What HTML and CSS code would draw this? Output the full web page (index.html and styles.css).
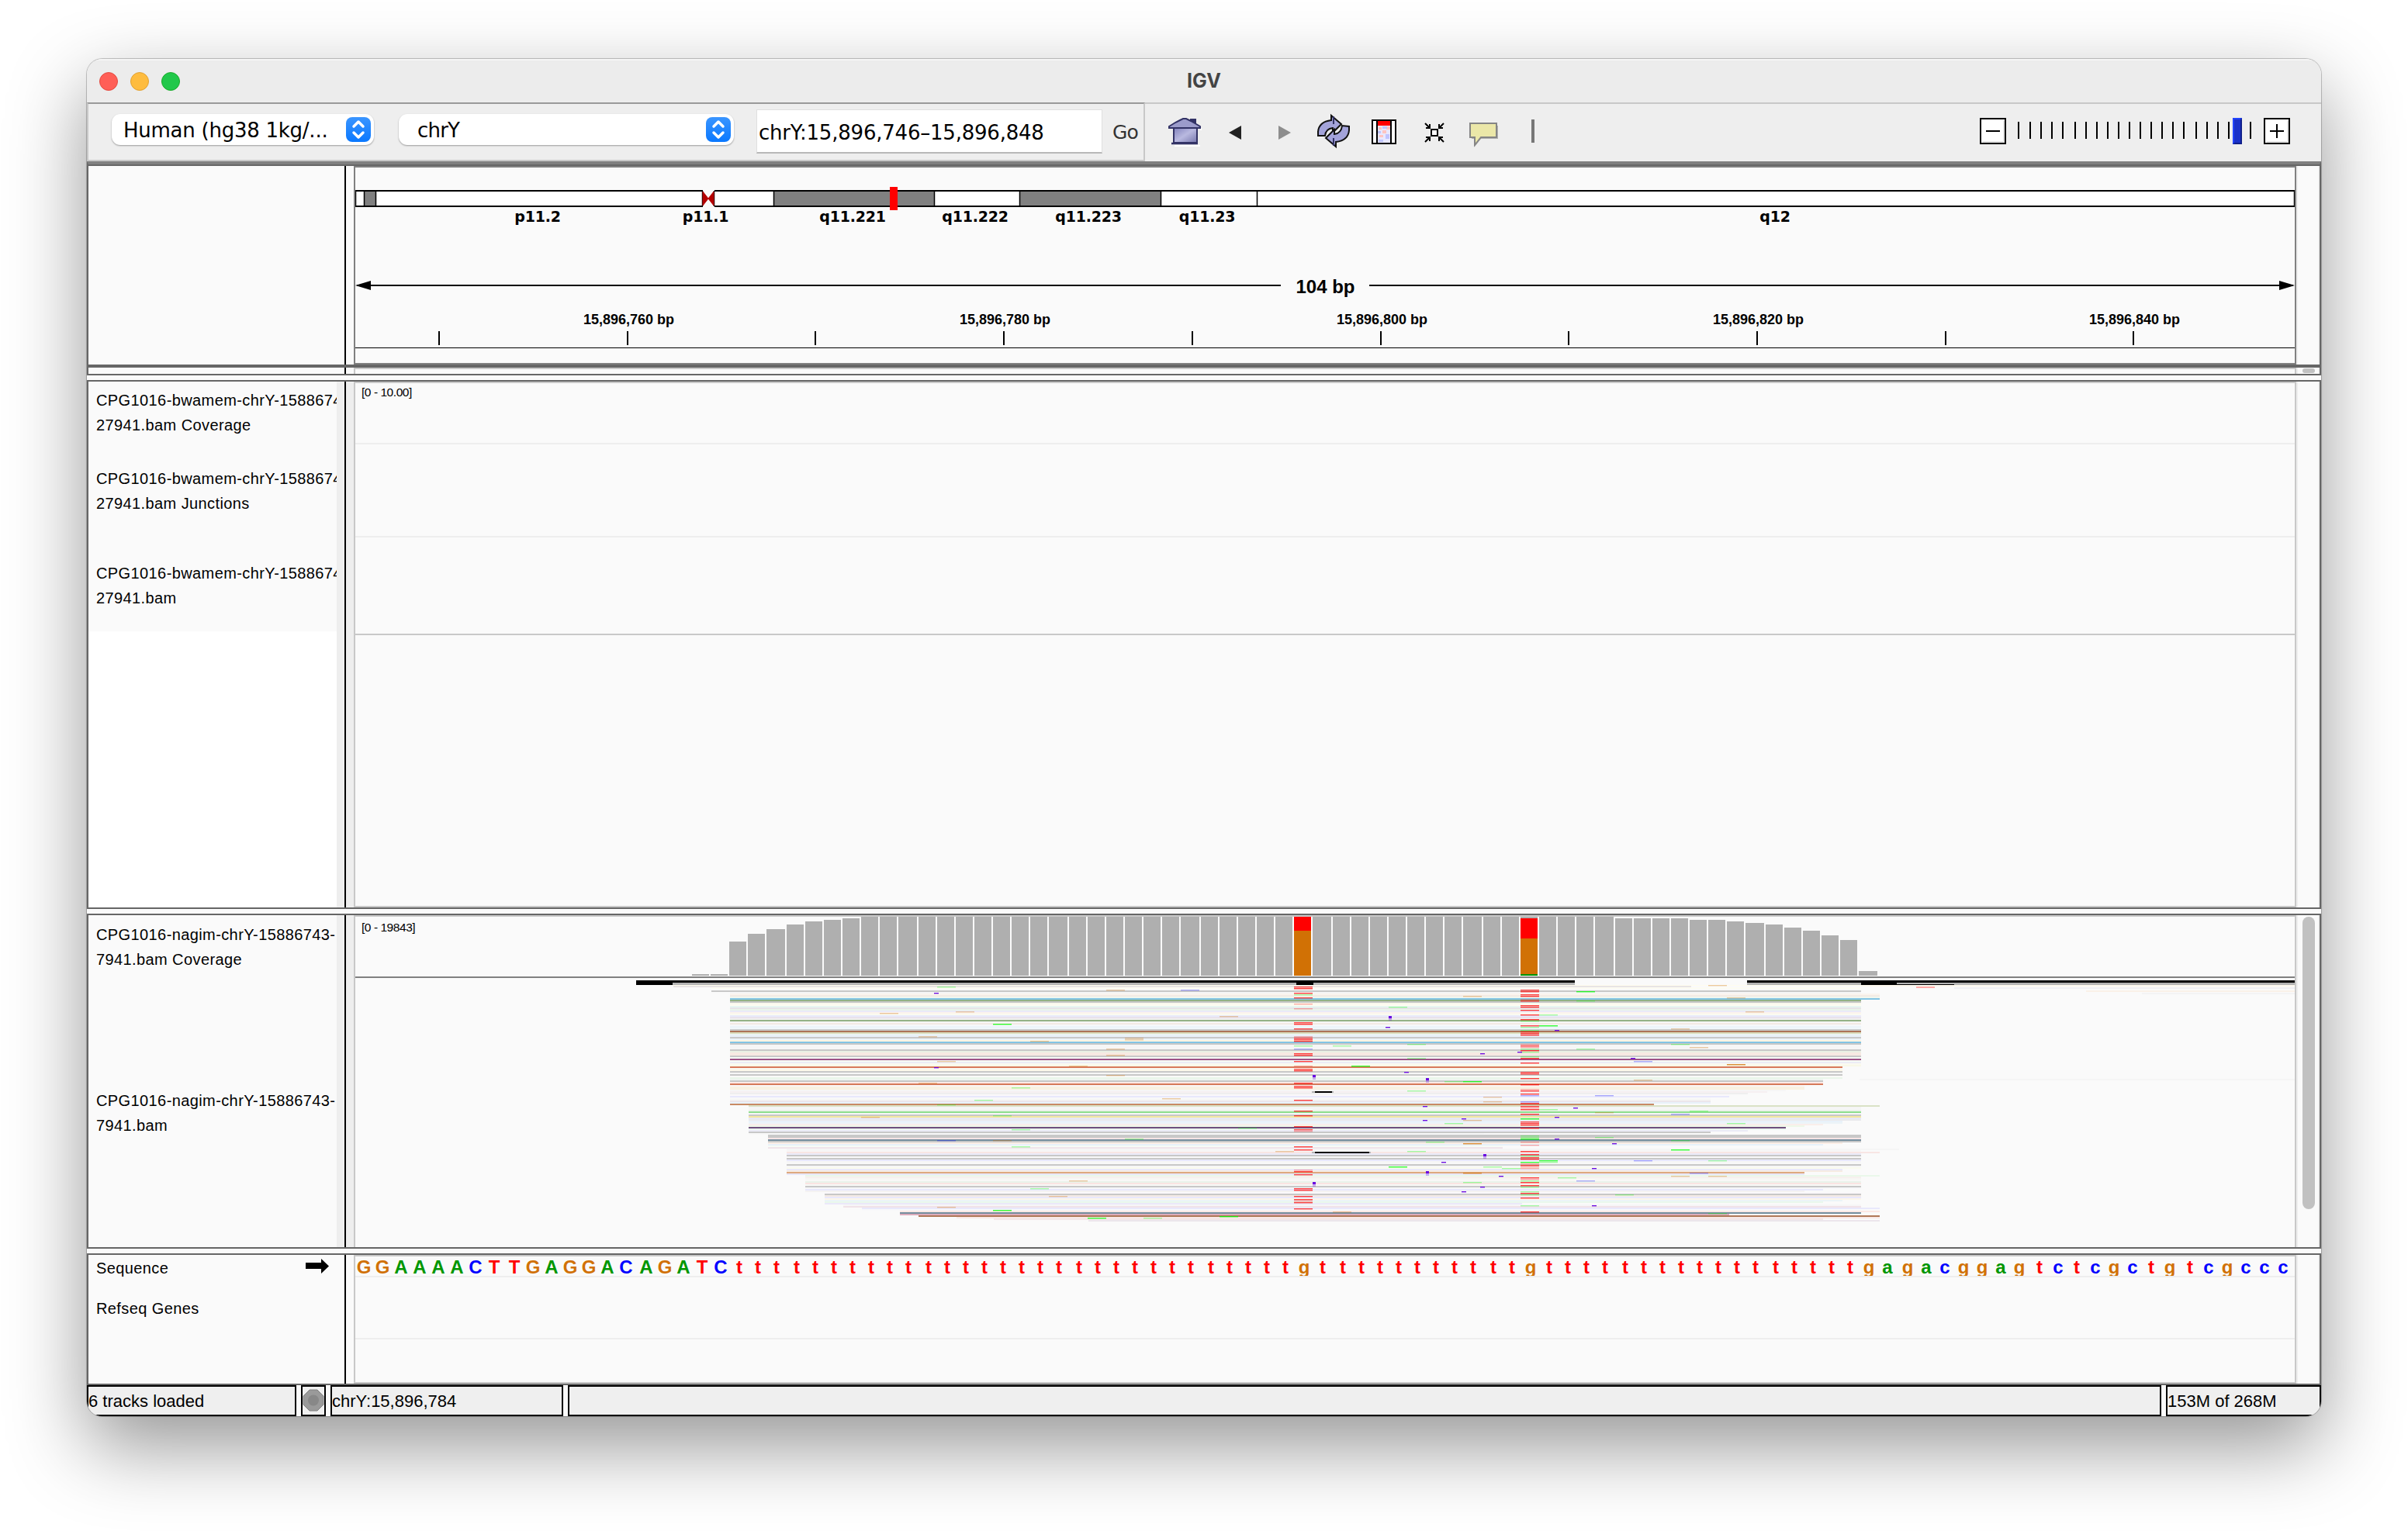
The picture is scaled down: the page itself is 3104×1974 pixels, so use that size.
FILE: index.html
```html
<!DOCTYPE html>
<html lang="en">
<head>
<meta charset="utf-8">
<title>IGV</title>
<link rel="stylesheet" href="styles.css">
</head>
<body>
<main class="window">
  <header class="titlebar">
    <div class="lights"><i class="light red"></i><i class="light amber"></i><i class="light green"></i></div>
    <h1 class="title">IGV</h1>
  </header>

  <div class="toolbar">
    <div class="locator">
      <div class="select genome"><span>Human (hg38 1kg/...</span><svg class="stepper" viewBox="0 0 32 32"><path d="M10 12l6-6 6 6M10 20l6 6 6-6"/></svg></div>
      <div class="select chrom"><span>chrY</span><svg class="stepper" viewBox="0 0 32 32"><path d="M10 12l6-6 6 6M10 20l6 6 6-6"/></svg></div>
      <div class="locus">chrY:15,896,746–15,896,848</div>
      <div class="go">Go</div>
    </div>
    <svg class="icons" viewBox="1478 134 560 72">
      <defs>
        <linearGradient id="lilac" x1="0" y1="0" x2="1" y2="1"><stop offset="0" stop-color="#7f7fba"/><stop offset=".5" stop-color="#b9b9e0"/><stop offset="1" stop-color="#7676ac"/></linearGradient>
      </defs>
      <g>
        <path d="M1514 188h33M1548 165v3" stroke="#fff" stroke-width="2"/>
        <path d="M1513 164h30v20h-30z" fill="url(#lilac)" stroke="#333366" stroke-width="2"/>
        <path d="M1534 158v-5h8v10z" fill="#333366"/>
        <path d="M1507 163l8-5 6-3 4-2h4l6 3 7 4 5 3v2h-40z" fill="#9c9ccb" stroke="#333366" stroke-width="2"/>
        <path d="M1510 185h34" stroke="#333366" stroke-width="2.5"/>
      </g>
      <path d="M1584 171l16-9v18z" fill="#222"/>
      <path d="M1664 171l-16-9v18z" fill="#8d8d8d"/>
      <g fill="#a3a3da" stroke="#111" stroke-width="2">
        <path d="M1699 175v-5q1-13 17-15v-6l13 11-11 11v-6q-9 1-10 10z"/>
        <path d="M1739 163v5q-1 13-17 15v6l-13-11 11-11v6q9-1 10-11z"/>
        <path d="M1719 150v10M1719 178v10" stroke="#333366"/>
      </g>
      <g>
        <path d="M1769 155h30v30h-30z" fill="#fff" stroke="#000" stroke-width="2"/>
        <path d="M1776 162h16v22h-16z" fill="#e8e8ff"/>
        <path d="M1777 164h4v3h-4zM1778 174h5v3h-5zM1782 168h5v4h-5zM1787 163h5v4h-5z" fill="#ffc4c0"/>
        <path d="M1782 163h6v3h-6zM1777 180h6v3h-6zM1786 173h5v6h-5zM1776 169h4v3h-4z" fill="#c0c4ff"/>
        <path d="M1776 156h16v6h-16z" fill="#f00"/>
        <path d="M1775 155v30M1793 155v30" stroke="#000" stroke-width="2"/>
      </g>
      <g stroke="#000" stroke-width="2" fill="none">
        <path d="M1845 167h8v8h-8z" fill="#fff"/>
        <path d="M1837 159l6 6M1861 159l-6 6M1837 183l6-6M1861 183l-6-6M1838 165h5v-5M1860 165h-5v-5M1838 177h5v5M1860 177h-5v5"/>
      </g>
      <path d="M1897 162h34v17h-22l-8 10v-10h-4z" fill="#b0b0b0"/>
      <path d="M1895 159h34v18h-20l-8 10v-10h-6z" fill="#ebe7a8" stroke="#858585" stroke-width="2"/>
      <path d="M1974 154h4v30h-4z" fill="#777"/>
    </svg>
    <svg class="zoomer" viewBox="2540 134 452 72" id="zoomer">
      <path d="M2553 153h32v32h-32zM2919 153h32v32h-32z" fill="#fff" stroke="#000" stroke-width="2"/>
      <path d="M2556 183h27v-27M2922 183h27v-27" fill="none" stroke="#e4e4e4" stroke-width="2"/>
      <path d="M2560 169h18M2926 169h18M2935 160v18" stroke="#000" stroke-width="2"/>
      <g id="zoom-ticks"></g>
      <path d="M2878 152h12v34h-12z" fill="#1a31c9"/><path d="M2878 152h10v2h-8v30h-2z" fill="#2244ff"/><path d="M2888 154h2v32h-10v-2h8z" fill="#10208a"/>
    </svg>
  </div>

  <section class="panel header">
    <div class="names"></div><div class="split"></div>
    <svg class="canvas" viewBox="458 216 2500 252" id="ruler">
      <path d="M458 246h448M921 246h2037M458 266h448M921 266h2037" stroke="#000" stroke-width="2"/>
      <path d="M458 247h447v18h-447zM921 247h2036v18h-2036z" fill="#fff"/>
      <path d="M469 247h15v18h-15zM998 247h206v18h-206zM1314 247h182v18h-182z" fill="#808080"/>
      <path d="M458.5 246v20M469.500 246v20M484.500 246v20M905.500 246v20M920.500 246v20M997.500 246v20M1204.500 246v20M1314.500 246v20M1496.500 246v20M1620.500 246v20M2957.500 246v20" stroke="#000" stroke-width="1.500"/>
      <path d="M906 247l7 9-7 9zM920 247l-7 9 7 9z" fill="#b40000" stroke="#b40000"/>
      <path d="M1147 241h10v30h-10z" fill="#f00"/>
      <g class="band"><text x="693" y="286">p11.2</text><text x="909.500" y="286">p11.1</text><text x="1099" y="286">q11.221</text><text x="1257" y="286">q11.222</text><text x="1403" y="286">q11.223</text><text x="1556" y="286">q11.23</text><text x="2288" y="286">q12</text></g>
      <path d="M460 368h1191M1765 368h1191" stroke="#000" stroke-width="2"/>
      <path d="M458 368l20-6v12zM2958 368l-20-6v12z"/>
      <text class="span" x="1708.500" y="378">104 bp</text>
      <g id="ruler-ticks"></g>
      <path d="M458 448h2500v1h-2500z"/>
    </svg>
    <div class="side"></div>
  </section>
  <section class="panel slim">
    <div class="names"></div><div class="split"></div><div class="canvas"></div>
    <div class="side"><i class="thumb"></i></div>
  </section>

  <section class="panel first">
    <div class="names">
      <div class="tracks">
        <p>CPG1016-bwamem-chrY-1588674<br>27941.bam Coverage</p>
        <p>CPG1016-bwamem-chrY-1588674<br>27941.bam Junctions</p>
        <p>CPG1016-bwamem-chrY-1588674<br>27941.bam</p>
      </div>
    </div><div class="split"></div>
    <div class="canvas">
      <div class="lane cov"><span class="range">[0 - 10.00]</span></div>
      <div class="lane junc"></div>
      <div class="lane reads"></div>
    </div>
    <div class="side"></div>
  </section>

  <section class="panel second">
    <div class="names">
      <p>CPG1016-nagim-chrY-15886743-<br>7941.bam Coverage</p>
      <p>CPG1016-nagim-chrY-15886743-<br>7941.bam</p>
    </div><div class="split"></div>
    <svg class="canvas" viewBox="458 1182 2500 426" shape-rendering="crispEdges">
      <text class="range" x="466" y="1201">[0 - 19843]</text>
      <g id="coverage"></g>
      <g id="reads"></g>
    </svg>
    <div class="side"><i class="thumb"></i></div>
  </section>

  <section class="panel third">
    <div class="names">
      <p class="seq-name">Sequence<svg class="arrow" viewBox="0 0 30 19"><path d="M0 5h20V0l10 9.500-10 9.500v-6H0z"/></svg></p>
      <p>Refseq Genes</p>
    </div><div class="split"></div>
    <div class="canvas">
      <div class="lane bases"><svg viewBox="458 1620 2500 25"><g id="bases"></g></svg></div>
      <div class="lane genes"></div>
    </div>
    <div class="side"></div>
  </section>

  <footer class="status">
    <div class="cell loaded">6 tracks loaded</div>
    <div class="cell lamp"><svg viewBox="0 0 28 36"><path d="M9 4h10l8 8v11l-8 8H9l-8-8V12z" fill="#9a9a9a" stroke="#808080"/><circle cx="14" cy="17.500" r="7" fill="#888"/></svg></div>
    <div class="cell position">chrY:15,896,784</div>
    <div class="cell message"></div>
    <div class="cell memory">153M of 268M</div>
  </footer>
</main>
<script src="tracks.js"></script>
</body>
</html>
```
FILE: styles.css
```css
* { box-sizing: border-box; }
html { height: 100%; }
body { margin: 0; height: 100%; padding: 76px 0 0 112px; background: #fff; overflow: hidden; font-family: "Liberation Sans", Arial, sans-serif; color: #000; }
h1, p { margin: 0; font-weight: normal; }
svg { display: block; }

.window {
  width: 2880px; height: 1750px; background: #fafafa;
  display: flex; flex-direction: column; border-radius: 20px; overflow: hidden;
  box-shadow: 0 0 0 1px rgba(0,0,0,.17), 0 0 2px rgba(0,0,0,.2), 0 38px 100px rgba(0,0,0,.42);
}

.titlebar { height: 56px; flex: none; background: #ececec; display: grid; grid-template-columns: 1fr auto 1fr; align-items: center; border-top: 2px solid #f5f5f5; }
.lights { display: flex; gap: 16px; padding-left: 16px; }
.light { width: 24px; height: 24px; border-radius: 50%; border: 1px solid; }
.red { background: #ff5f57; border-color: #e24b41; }
.amber { background: #febc3f; border-color: #e0a032; }
.green { background: #21c84a; border-color: #1aab29; }
.title { font: 700 25px/48px Inter, sans-serif; color: #444; padding-bottom: 3px; }

.toolbar { height: 76px; flex: none; display: flex; background: #eee; border-top: 2px solid #c8c8c8; }
.locator { width: 1364px; margin-top: -2px; border: 2px solid #c8c8c8; border-top-color: #999; display: flex; padding-left: 30px; font: 26px/40px "DejaVu Sans", sans-serif; }
.select { height: 40px; margin-top: 13px; background: #fff; border-radius: 11px; box-shadow: 0 1px 2px rgba(0,0,0,.35); display: flex; justify-content: space-between; align-items: center; padding-right: 4px; white-space: nowrap; }
.select span { padding-top: 2px; }
.genome { width: 338px; padding-left: 15px; margin-right: 32px; letter-spacing: -.25px; }
.chrom { width: 432px; padding-left: 24px; margin-right: 29px; letter-spacing: -.8px; }
.stepper { width: 32px; height: 32px; border-radius: 8px; background: linear-gradient(#3a95ff, #0a78ff); fill: none; stroke: #fff; stroke-width: 3.500; stroke-linecap: round; stroke-linejoin: round; }
.locus { width: 446px; height: 57px; margin-top: 7px; background: #fff; border: 1px solid #e0e0e0; border-bottom: 2px solid #b8b8b8; padding-left: 2px; line-height: 58px; letter-spacing: -.22px; }
.go { padding-left: 13px; line-height: 73px; color: #333; font-size: 25px; letter-spacing: -.8px; }
.icons { width: 560px; height: 72px; margin-left: 2px; }
.zoomer { width: 452px; height: 72px; margin-left: auto; shape-rendering: crispEdges; }

.panel { flex: none; display: flex; border: 2px solid #666; background: #fafafa; }
.names { width: 320px; flex: none; overflow: hidden; font-size: 20px; line-height: 32px; letter-spacing: .4px; white-space: nowrap; }
.names p { padding-left: 10px; }
.split { width: 22px; flex: none; background: linear-gradient(#000, #000) 10px 0 / 2px 100% no-repeat #eee; }
.canvas { width: 2504px; flex: none; border: 2px solid #c8c8c8; background: #fafafa; overflow: hidden; }
.side { width: 30px; flex: none; border-left: 2px solid #eee; border-right: 2px solid #f0f0f0; padding-left: 6px; }
.thumb { display: block; width: 16px; border-radius: 8px; background: #c1c1c1; }
.lane { border-bottom: 2px solid #eee; }
.range { font-size: 15.500px; letter-spacing: -.45px; }

.header { height: 264px; border-top: 4px solid #808080; border-bottom: 2px solid #666; box-shadow: inset 0 2px #666; padding-top: 2px; }
.header .canvas { height: 256px; border-color: #808080; }
.header .split, .slim .split, .third .split { background-color: #fafafa; }
.slim { height: 12px; }
.slim .canvas { border-bottom: 0; }
.slim .thumb { height: 6px; margin-top: 1px; border-radius: 4px; }
.first { height: 682px; margin-top: 6px; }
.first .names { background: #fff; }
.tracks { height: 322px; padding-top: 8px; background: #fafafa; }
.tracks p + p { margin-top: 37px; }
.tracks p + p + p { margin-top: 58px; }
.cov { height: 79px; padding: 2px 0 0 8px; line-height: 20px; }
.junc { height: 120px; }
.reads { height: 126px; border-color: #c8c8c8; }
.second { height: 432px; margin-top: 6px; }
.second .names { padding-top: 9px; }
.second p + p { margin-top: 150px; }
.second .canvas { border-bottom: 0; }
.second .thumb { height: 377px; margin-top: 2px; }
.third { height: 170px; margin-top: 6px; }
.third .names { padding-top: 1px; }
.third p + p { margin-top: 20px; }
.seq-name { display: flex; justify-content: space-between; padding-right: 10px; }
.arrow { width: 30px; height: 19px; margin-top: 4px; }
.bases { height: 27px; }
.genes { height: 80px; }

#ruler text { text-anchor: middle; font-weight: bold; }
.band { font: 19px "DejaVu Sans", sans-serif; letter-spacing: -.2px; }
.span { font-size: 24px; }
#ruler-ticks { font-size: 18px; }
#bases { font-size: 24px; font-weight: bold; text-anchor: middle; }

.status { height: 40px; flex: none; display: flex; gap: 6px; }
.cell { border: 2px solid #000; background: #efefef; font-size: 22px; line-height: 37px; white-space: nowrap; }
.loaded { width: 270px; }
.lamp { width: 32px; }
.position { width: 300px; }
.message { flex: 1; }
.memory { width: 200px; }
```
FILE: tracks.js
```js
const rect = (x, y, w, h, fill, o) =>
  `<rect x="${x}" y="${y}" width="${w}" height="${h}" fill="${fill}"${o ? ` opacity="${o}"` : ''}/>`;
const put = (id, html) => { document.getElementById(id).innerHTML = html; };
const baseX = i => 2 * Math.round((455 + 24.27 * i) / 2);
const readX = i => Math.round(455 + 24.3 * i);
const rowY = n => 1160 + n / 3;

/* zoom slider */
put('zoom-ticks', [2601, 2616, 2630, 2644, 2658, 2674, 2688, 2702, 2716, 2730, 2744, 2758, 2772, 2786, 2800, 2814, 2830, 2844, 2858, 2872, 2900]
  .map(x => rect(x, 157, 2, 22, '#000')).join(''));

/* ruler */
let out = '';
for (let k = 0; k < 10; k++) {
  const x = Math.round(566 + 242.7 * k);
  out += rect(x - 1, 427, 2, 18, '#000');
  if (k % 2) out += `<text x="${x + 1.5}" y="418">15,896,${750 + 10 * k} bp</text>`;
}
put('ruler-ticks', out);

/* coverage: top edge of each bar */
const tops = { 18: 1256, 19: 1256, 20: 1214, 21: 1204, 22: 1198, 23: 1192, 24: 1188, 25: 1186, 26: 1184, 67: 1184, 68: 1184, 69: 1184, 70: 1184, 71: 1186, 72: 1186, 73: 1188, 74: 1190, 75: 1192, 76: 1196, 77: 1200, 78: 1206, 79: 1212, 80: 1252 };
out = '';
for (let i = 18; i <= 80; i++) {
  const t = tops[i] || 1182, w = i === 80 ? 24 : baseX(i + 1) - baseX(i) - 2;
  out += rect(baseX(i), t, Math.min(w, 24), 1258 - t, '#afafaf');
}
out += rect(baseX(50), 1182, 22, 18, '#f00') + rect(baseX(50), 1200, 22, 58, '#d17105');
out += rect(baseX(62), 1184, 22, 26, '#f00') + rect(baseX(62), 1210, 22, 46, '#d17105') + rect(baseX(62), 1256, 22, 2, '#009600');
out += rect(458, 1259, 2500, 2, '#808080');
put('coverage', out);

/* aligned reads: colours per row, with first and last base of each run */
const G = 'c8c8c8';
const runs = [
  [333, 17, 71, 'e8e4e4'], [339, 19, 80, 'fdfcf3'], [345, 20, 80, 'f8f8f8'], [351, 19, 80, G], [357, 20, 80, 'f6f6f6'],
  [363, 20, 81, 'fbf4ee f3ebe5 f0f6ee 82c4e4'],
  [387, 20, 80, `93b285 ${G} faf9ec fefcf2 e8f6f2 e7e5e8 e9f4ea eaeaf9 fcf3ec fafbf0 e8eafb e8e2ec f0f0ee 94b286 f6f6f6 f3eae4 f6f8fa ecf4fa f0f6fa ${G} ac7458 dbdfbf ebf3f4 e8f0fa ${G} ecf4fa fbf5e2 82c4e4 ${G} f6f6f6 f6f6f6 f6f6f6 ${G} eaf0e4 f7e8e2 f7e8e2 ${G} f4faf6 9f5288 f6faf4 ececf6 fbfaf0 f8f8e8`],
  [645, 20, 79, `d87a5c faf8f0 fcf8ea ${G} f6f6f6 ${G} fafaf8 eaf6ea`],
  [693, 20, 78, `eef4f0 ${G} fce8e4 d67a5a`], [717, 20, 77, 'faf6f6 f9f1e2 f9f1e2'], [735, 20, 76, 'f6f6f6'], [741, 20, 75, 'f6f0f2'],
  [747, 20, 74, 'efefef'], [753, 20, 73, 'faf8fa e8e8fc'], [765, 20, 72, 'f8f8f8 f6f6f4 ece6ec e8f2fa'], [789, 20, 69, 'c88a64'],
  [795, 21, 81, 'dae2c6'], [801, 21, 80, `f4f4f4 f6f6f6 eaf2ea 8ede8e f6f6f6 ${G} f4e8a0 e6e8f6 eaeaec`],
  [855, 21, 79, 'e8f2fa ecf4f8'], [867, 21, 78, 'faeeea'], [873, 21, 77, 'eef8e8'], [879, 21, 76, '6e507e ecf6f0'], [891, 21, 74, 'ebebf6'],
  [897, 21, 72, G], [903, 21, 60, 'f8f8f8'], [909, 22, 80, `${G} ${G} f6e4e4 748e9e ${G}`], [939, 22, 79, 'fbeee6'], [945, 22, 78, 'e8f2fa'],
  [951, 22, 61, 'f6fbf6 f0e4ea'], [963, 23, 82, 'f5f5f5'], [969, 23, 80, 'f6f6f6'], [975, 23, 81, 'f8e6e4'],
  [981, 23, 80, `ebebf9 ${G} f8f8f8 ${G} e8e8fc f6f6f6 f8f8f8 ${G} f6f6f6 fafbee`], [1041, 23, 79, 'e8e8fa f6ebe2'],
  [1053, 23, 77, 'dea87e e8e8fc'], [1065, 24, 81, 'eaf8ea'], [1071, 24, 80, `f6f0ee f6f6f4 f8f8f6 eaf2ea fae4e2 f8f8f6 ${G} f6f6f8`],
  [1119, 24, 78, 'e8e8fc'], [1125, 24, 77, 'f4f2f2'], [1131, 25, 80, `faf8fa ${G} f4eae4 e8e8fc fcf6ea`], [1161, 25, 79, 'ebf4f8'],
  [1167, 25, 78, 'eaf8ec'], [1173, 25, 62, 'ebe8fa'], [1179, 26, 80, 'f6f6f6 f0e2e8'], [1191, 27, 81, 'e8e8fc'], [1197, 27, 72, 'f8f8fa'],
  [1203, 29, 81, 'fce8e4'], [1209, 29, 80, '748e9e'], [1215, 29, 73, 'dcacbc'], [1221, 30, 81, 'b07858'], [1227, 32, 81, 'f8e8e6'],
  [1233, 34, 78, 'f4e6e8'], [1239, 39, 81, 'ece6ec']
];
out = '';
for (const [y, a, b, cols] of runs)
  cols.split(' ').forEach((c, n) => { out += rect(readX(a), rowY(y + 6 * n), readX(b) - readX(a), 2, '#' + c); });

/* collapsed reads above the pile and the pale tails at the right */
out += rect(820, 1264, 1210, 3, '#000') + rect(820, 1267, 47, 3, '#000') + rect(867, 1267, 1163, 3, '#b4b4b4');
out += rect(2252, 1264, 706, 3, '#000') + rect(2252, 1267, 706, 3, '#b4b4b4') + rect(2399, 1267, 46, 3, '#000') + rect(2445, 1269, 74, 1, '#000');
out += rect(1671, 1267, 22, 4, '#000') + rect(867, 1270, 1532, 1, '#fffcee') + rect(2399, 1270, 559, 2, '#fdf8ee');
out += rect(2519, 1273, 439, 2, '#f0f0f3') + rect(2689, 1277, 269, 2, '#faf1e8') + rect(2761, 1280, 197, 2, '#f4f4f4');
out += rect(2470, 1272, 24, 2, '#ffaaa8') + rect(2397, 1391, 561, 2, '#f5f5f5');

/* mismatched bases: upper case is high quality, lower case is low */
const inks = { R: ['#f00', .75], r: ['#f00', .32], G: ['#0f0', .8], g: ['#0f0', .34], O: ['#d17105', .8], o: ['#d17105', .36], b: ['#00f', .32] };
const marks = `
50 R336 R342 R360 g366 R378 r402 r420 R474 R480 R498 r528 R534 R540 R546 g564 b576 R594 R600 R624 r642 R654 R660 R708 R720 R726 R774 R816 R834 R876 R888 r894 R954 R966 r1044 R1050 R1062 R1116 R1122 R1146 R1158 r1164 R1170 R1194
62 R348 R354 R366 R372 r384 R390 R408 R414 R426 R444 R462 g468 R486 g492 g504 R510 R516 R522 r558 R564 r570 g576 R582 g588 g606 R612 R630 R666 R672 R690 R714 r732 R738 R750 b756 b780 R786 R798 r804 R810 R828 G846 R858 R864 R870 R882 g912 g918 G924 r936 r948 R972 R984 g990 R996 R1002 G1014 r1020 R1026 r1032 r1038 R1074 r1080 g1086 R1092 R1104 g1110 g1128 R1134 g1140 R1152 g1182 R1206
27 o840
28 o438
30 o528 o708
31 g336 o624 g792 b930 o1188
32 o432
33 g774
34 G480 g834 o930 G1200
35 g726 g888 g954
36 o546 g1116
37 o1146
38 o642 o1086
39 G1230
40 o348 o576 o600 o678
41 o534 o540 g924
42 g1230
43 o768
44 b348
46 o450 G1224
47 g882
49 o972
52 g564 o1206
53 G642
55 g414 G1032
56 g558 g612 g738 g972
57 g936
58 g702 g864
59 o372 G702 o852 O942 O1056 g1092
60 o762 o780 g1032
61 g1038
63 g444 G486 g810 G1008 g1014
64 g1074
65 G354 g390 g576 b1086
66 b756 o822 g918
67 g1140
68 b624 o696 b1008
70 o498 g558 b828 g930 G966 o1068
71 o570 g816 b1056
72 o330 g1008 o1068 g1212
73 o378 O636 g864
74 o432`;
for (const line of marks.trim().split('\n')) {
  const [i, ...list] = line.split(' ');
  for (const m of list) {
    const [c, o] = inks[m[0]], y = rowY(+m.slice(1));
    out += rect(baseX(+i), y, 24, 1, c, o) + rect(baseX(+i), y + 1, 24, 1, c, o * .38);
  }
}

/* insertions */
for (const [x, y] of [[1204, 360], [1204, 648], [1786, 492], [2004, 504], [1956, 588], [1908, 594], [2102, 612], [1810, 666], [1834, 798], [2028, 804], [2004, 840], [1884, 846], [1834, 852], [2004, 924], [2078, 942], [1858, 1014], [2052, 1038], [1932, 1068], [1908, 1110], [1884, 1128], [2052, 1182]])
  out += rect(x, rowY(y), 6, 1, '#6a0be0') + rect(x, rowY(y) + 1, 6, 1, '#6a0be0', .35);
for (const [x, y] of [[1790, 450], [1692, 678], [1838, 690], [1912, 984], [1838, 1050], [1692, 1092]])
  out += rect(x, rowY(y), 4, 3, '#6a0be0') + rect(x, rowY(y) + 3, 4, 3, '#6a0be0', .3);

/* deletions */
out += rect(1691, 1407, 28, 2, '#b4b4b4') + rect(1695, 1407, 22, 2, '#000');
out += rect(1691, 1485, 76, 2, '#b4b4b4') + rect(1695, 1485, 70, 2, '#000');
put('reads', out);

/* reference sequence */
const seq = 'GGAAAACTTGAGGACAGATC' + 't'.repeat(30) + 'g' + 't'.repeat(11) + 'g' + 't'.repeat(17) + 'gagacggagtctcgctgtcgccc';
const baseInk = { a: '#009600', c: '#00f', g: '#d17105', t: '#f00' };
put('bases', [...seq].map((b, i) => `<text x="${baseX(i) + 13}" y="1642" fill="${baseInk[b.toLowerCase()]}">${b}</text>`).join(''));
```
